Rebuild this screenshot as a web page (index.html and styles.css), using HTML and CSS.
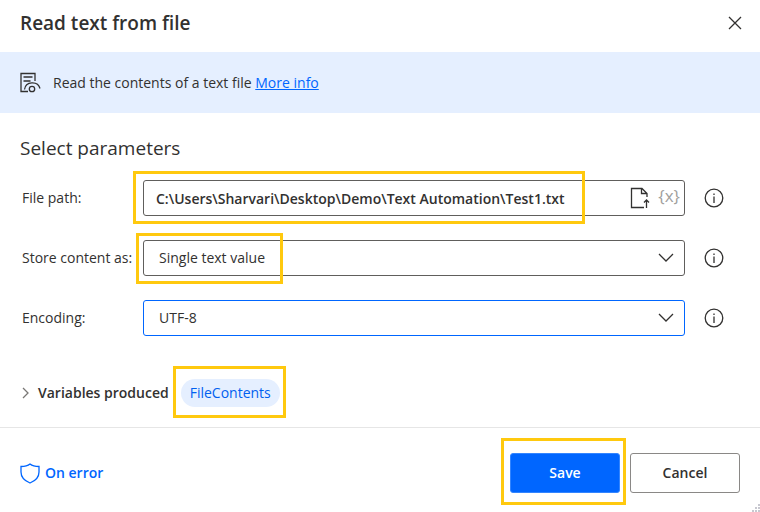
FILE: index.html
```html
<!DOCTYPE html>
<html lang="en">
<head>
    <meta charset="UTF-8">
    <meta name="viewport" content="width=device-width, initial-scale=1.0">
    <title>Read text from file</title>
    <link rel="stylesheet" href="styles.css">
</head>
<body>
    <form class="dialog">
        <header class="header">
            <h1>Read text from file</h1>
            <button type="button" class="icon-button" aria-label="Close">
                <svg width="14" height="14" viewBox="0 0 14 14"><path d="M1 1l12 12M13 1L1 13"/></svg>
            </button>
        </header>

        <div class="banner">
            <svg width="21" height="21" viewBox="0 0 21 21">
                <path d="M8 19.500H1V1.500h14V9M3.500 5h9M3.500 9h7M4.500 17.500c1-8.500 13.500-9 15.500-1"/>
                <circle cx="12" cy="17" r="2.700"/>
            </svg>
            <p>Read the contents of a text file <a href="#">More info</a></p>
        </div>

        <main class="content">
            <h2>Select parameters</h2>

            <div class="row">
                <label for="filePath">File path:</label>
                <div class="field">
                    <input type="text" id="filePath" value="C:\Users\Sharvari\Desktop\Demo\Text Automation\Test1.txt">
                    <button type="button" class="icon-button" aria-label="Select file">
                        <svg width="20" height="22" viewBox="0 0 20 22">
                            <path d="M14 20.500H1.500V1.500h10.500l5 5V10M11.500 1.500v5H17M16.500 21v-8M14 15.500l2.500-2.500 2.500 2.500"/>
                        </svg>
                    </button>
                    <button type="button" class="icon-button variable">{x}</button>
                    <span class="highlight highlight-path"></span>
                </div>
                <button type="button" class="icon-button" aria-label="File path info">
                    <svg width="20" height="20" viewBox="0 0 20 20"><circle cx="10" cy="10" r="8.800"/><path d="M10 8.500V15M10 5.500v1.500"/></svg>
                </button>
            </div>

            <div class="row">
                <label for="storeAs">Store content as:</label>
                <div class="field">
                    <select id="storeAs">
                        <option>Single text value</option>
                        <option>List (each is a list item)</option>
                    </select>
                    <svg class="chevron" width="16" height="10" viewBox="0 0 16 10"><path d="M1 1l7 7 7-7"/></svg>
                    <span class="highlight highlight-store"></span>
                </div>
                <button type="button" class="icon-button" aria-label="Store content info">
                    <svg width="20" height="20" viewBox="0 0 20 20"><circle cx="10" cy="10" r="8.800"/><path d="M10 8.500V15M10 5.500v1.500"/></svg>
                </button>
            </div>

            <div class="row">
                <label for="encoding">Encoding:</label>
                <div class="field active">
                    <select id="encoding">
                        <option>UTF-8</option>
                        <option>Unicode</option>
                        <option>ASCII</option>
                    </select>
                    <svg class="chevron" width="16" height="10" viewBox="0 0 16 10"><path d="M1 1l7 7 7-7"/></svg>
                </div>
                <button type="button" class="icon-button" aria-label="Encoding info">
                    <svg width="20" height="20" viewBox="0 0 20 20"><circle cx="10" cy="10" r="8.800"/><path d="M10 8.500V15M10 5.500v1.500"/></svg>
                </button>
            </div>

            <div class="variables">
                <button type="button" class="expander">
                    <svg width="7" height="12" viewBox="0 0 7 12"><path d="M1 1l5 5-5 5"/></svg>
                    Variables produced
                </button>
                <div class="chip-box">
                    <button type="button" class="chip">FileContents</button>
                    <span class="highlight highlight-chip"></span>
                </div>
            </div>
        </main>

        <footer class="footer">
            <button type="button" class="on-error">
                <svg width="20" height="21" viewBox="0 0 20 21"><path d="M10 1C7.500 3 4 3.500 1 3.500V9c0 5 4 9 9 11 5-2 9-6 9-11V3.500C16 3.500 12.500 3 10 1z"/></svg>
                On error
            </button>
            <div class="save-box">
                <button type="submit" class="button save">Save</button>
                <span class="highlight highlight-save"></span>
            </div>
            <button type="button" class="button">Cancel</button>
            <svg class="grip" width="8" height="8" viewBox="0 0 8 8"><path d="M6 0h2v2H6zM3 3h2v2H3zM6 3h2v2H6zM0 6h2v2H0zM3 6h2v2H3zM6 6h2v2H6z"/></svg>
        </footer>
    </form>
</body>
</html>
```

FILE: styles.css
```css
* {
    box-sizing: border-box;
}
body {
    margin: 0;
    background: #fff;
    color: #323130;
    font-family: "Open Sans", "Noto Sans", sans-serif;
    font-size: 14px;
    line-height: 20px;
}
h1, h2, p {
    margin: 0;
}
button, input, select {
    font: inherit;
    color: inherit;
}
button {
    padding: 0;
    border: none;
    background: none;
    cursor: pointer;
}
svg {
    display: block;
    flex: none;
    fill: none;
    stroke: currentColor;
    stroke-width: 1.3;
}
.dialog {
    display: flex;
    flex-direction: column;
    min-height: 100vh;
}
.header {
    display: flex;
    align-items: center;
    justify-content: space-between;
    height: 52px;
    padding: 0 18px 6px 20px;
}
.header h1 {
    font-size: 19px;
    font-weight: 600;
}
.banner {
    display: flex;
    align-items: center;
    gap: 12px;
    padding: 20px;
    background: #e5efff;
}
.banner a {
    color: #0066ff;
}
.content {
    flex: 1;
    display: flex;
    flex-direction: column;
    gap: 24px;
    padding: 22px 36px 20px 22px;
}
.content h2 {
    margin: 0 0 -5px -2px;
    font-size: 19px;
    font-weight: 400;
    line-height: 26px;
}
.row {
    display: grid;
    grid-template-columns: 121px 1fr 20px;
    align-items: center;
}
.row > .icon-button {
    justify-self: end;
}
.field {
    position: relative;
    display: flex;
    align-items: center;
    height: 36px;
    margin-right: 19px;
    border: 1px solid #605e5c;
    border-radius: 3px;
}
.field.active {
    border-color: #0066ff;
}
.field input, .field select {
    flex: 1;
    min-width: 0;
    height: 34px;
    border: none;
    outline: none;
    background: none;
}
.field input {
    padding: 0 12px;
    font-weight: 600;
}
.field select {
    appearance: none;
    padding: 0 36px 0 15px;
}
.chevron {
    position: absolute;
    right: 10px;
    pointer-events: none;
}
.variable {
    margin: 0 4px 4px 8px;
    color: #a19f9d;
    font-size: 17px;
}
.highlight {
    position: absolute;
    border: 3px solid #ffc90e;
    pointer-events: none;
}
.highlight-path {
    inset: -10px 99px -9px -11px;
}
.highlight-store {
    top: -8px;
    bottom: -9px;
    left: -8px;
    width: 147px;
}
.highlight-chip {
    inset: -13px -6px -11px -8px;
}
.highlight-save {
    inset: -15px -6px -12px -9px;
}
.variables {
    display: flex;
    align-items: center;
    gap: 12px;
    margin-top: 19px;
}
.expander {
    display: flex;
    align-items: center;
    gap: 9px;
    font-weight: 600;
}
.expander svg {
    color: #797775;
}
.chip-box, .save-box {
    position: relative;
}
.chip {
    display: block;
    height: 28px;
    padding: 0 9px;
    border-radius: 14px;
    background: #e5efff;
    color: #0060f0;
}
.footer {
    position: relative;
    display: flex;
    align-items: center;
    gap: 10px;
    padding: 25px 20px 19px;
    border-top: 1px solid #e6e6e6;
}
.on-error {
    display: flex;
    align-items: center;
    gap: 5px;
    margin-right: auto;
    color: #0066ff;
    font-weight: 600;
}
.button {
    display: block;
    width: 110px;
    height: 40px;
    border: 1px solid #8a8886;
    border-radius: 3px;
    font-weight: 600;
}
.save {
    border-color: #3385ff;
    background: #0066ff;
    color: #fff;
}
.grip {
    position: absolute;
    right: 0;
    bottom: 0;
    fill: #c8c8d0;
    stroke: none;
}
```
